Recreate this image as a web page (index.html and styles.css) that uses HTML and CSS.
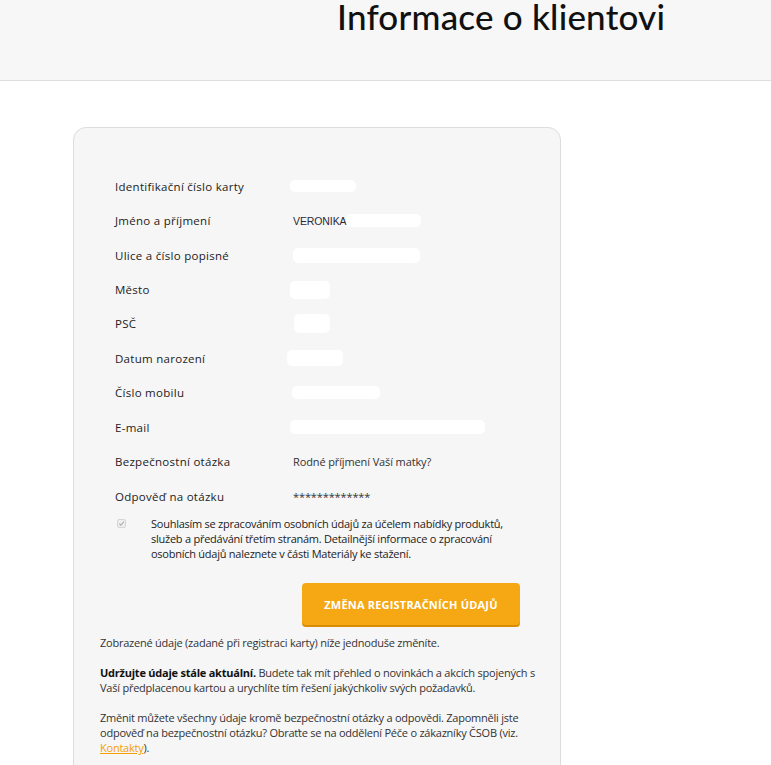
FILE: index.html
```html
<!DOCTYPE html>
<html lang="cs">
<head>
<meta charset="utf-8">
<title>Informace o klientovi</title>
<link rel="stylesheet" href="styles.css">
</head>
<body>
<header class="top">
  <h1 class="title">Informace o klientovi</h1>
</header>
<main class="main">
  <section class="card">
    <div class="rows">
      <div class="row"><span class="label">Identifikační číslo karty</span><span class="value"><span class="mask" style="width:66px;height:12px;margin-left:-3px"></span></span></div>
      <div class="row"><span class="label">Jméno a příjmení</span><span class="value"><span class="name">VERONIKA</span><span class="mask" style="width:75px;height:13px"></span></span></div>
      <div class="row"><span class="label">Ulice a číslo popisné</span><span class="value"><span class="mask" style="width:127px;height:15px"></span></span></div>
      <div class="row"><span class="label">Město</span><span class="value"><span class="mask" style="width:40px;height:18px;margin-left:-3px"></span></span></div>
      <div class="row"><span class="label">PSČ</span><span class="value"><span class="mask" style="width:36px;height:19px;margin-left:1px"></span></span></div>
      <div class="row"><span class="label">Datum narození</span><span class="value"><span class="mask" style="width:56px;height:16px;margin-left:-6px"></span></span></div>
      <div class="row"><span class="label">Číslo mobilu</span><span class="value"><span class="mask" style="width:88px;height:13px;margin-left:-1px"></span></span></div>
      <div class="row"><span class="label">E-mail</span><span class="value"><span class="mask" style="width:195px;height:14px;margin-left:-3px"></span></span></div>
      <div class="row"><span class="label">Bezpečnostní otázka</span><span class="value text">Rodné příjmení Vaší matky?</span></div>
      <div class="row"><span class="label">Odpověď na otázku</span><span class="value text">*************</span></div>
    </div>
    <div class="consent">
      <span class="check" aria-hidden="true">
        <svg width="9" height="9" viewBox="0 0 9 9"><rect x="0.5" y="0.5" width="8" height="8" rx="1.5" fill="#eee" stroke="#d6d6d6"/><path d="M2.2 4.6 L3.8 6.1 L6.9 2.7" fill="none" stroke="#b0b0b0" stroke-width="1.1"/></svg>
      </span>
      <p class="consent-text">Souhlasím se zpracováním osobních údajů za účelem nabídky produktů, služeb a předávání třetím stranám. Detailnější informace o zpracování osobních údajů naleznete v části Materiály ke stažení.</p>
    </div>
    <div class="actions">
      <button class="btn" type="button">ZMĚNA REGISTRAČNÍCH ÚDAJŮ</button>
    </div>
    <div class="info">
      <p>Zobrazené údaje (zadané při registraci karty) níže jednoduše změníte.</p>
      <p><strong>Udržujte údaje stále aktuální.</strong> Budete tak mít přehled o novinkách a akcích spojených s Vaší předplacenou kartou a urychlíte tím řešení jakýchkoliv svých požadavků.</p>
      <p>Změnit můžete všechny údaje kromě bezpečnostní otázky a odpovědi. Zapomněli jste odpověď na bezpečnostní otázku? Obraťte se na oddělení Péče o zákazníky ČSOB (viz. <a href="#" class="link">Kontakty</a>).</p>
    </div>
  </section>
</main>
</body>
</html>
```

FILE: styles.css
```css
html, body {
  margin: 0;
  padding: 0;
  background: #ffffff;
  font-family: "Open Sans", "Liberation Sans", sans-serif;
  color: #222;
}

.top {
  height: 80px;
  background: #f7f7f7;
  border-bottom: 1px solid #dedede;
}

.title {
  margin: 0;
  padding: 0 0 0 337px;
  font-family: Lato, "Noto Sans", sans-serif;
  font-weight: 500;
  font-size: 35px;
  line-height: 32px;
  color: #111;
  letter-spacing: 0.2px;
}

.main {
  padding: 46px 0 0 73px;
}

.card {
  width: 486px;
  background: #f6f6f6;
  border: 1px solid #dddddd;
  border-radius: 13px;
  padding: 41px 0 30px 0;
  min-height: 700px;
}

.rows {
  padding-left: 41px;
}

.row {
  display: flex;
  align-items: center;
  height: 34.45px;
}

.label {
  width: 178px;
  flex: none;
  font-size: 11.5px;
  letter-spacing: 0.28px;
  color: #222;
}

.value {
  display: flex;
  align-items: center;
  font-size: 11px;
  letter-spacing: -0.12px;
  color: #333;
}

.name {
  font-family: "Liberation Sans", Arial, sans-serif;
  font-size: 10.5px;
  letter-spacing: -0.1px;
  color: #2a2a3a;
}

.mask {
  display: inline-block;
  background: #ffffff;
  border-radius: 5px;
}

.consent {
  display: flex;
  align-items: flex-start;
  padding: 3px 40px 0 43px;
}

.check {
  flex: none;
  width: 34px;
  padding-top: 3px;
  line-height: 0;
}

.consent-text {
  margin: 0;
  font-size: 11px;
  line-height: 15px;
  letter-spacing: -0.25px;
  color: #222;
}

.actions {
  display: flex;
  justify-content: flex-end;
  padding: 22px 40px 0 0;
}

.btn {
  width: 218px;
  height: 42px;
  border: none;
  border-radius: 4px;
  background: #f5a814;
  box-shadow: 0 2px 0 #d88d05;
  color: #ffffff;
  font-family: "Open Sans", "Liberation Sans", sans-serif;
  font-weight: 700;
  font-size: 11px;
  letter-spacing: 0.2px;
  cursor: pointer;
}

.info {
  padding: 10px 20px 0 26px;
}

.info p {
  margin: 0 0 15px 0;
  font-size: 11px;
  line-height: 15px;
  letter-spacing: -0.23px;
  color: #333;
}

.info strong {
  color: #111;
  font-weight: 700;
}

.link {
  color: #f5a000;
  text-decoration: underline;
}
```
